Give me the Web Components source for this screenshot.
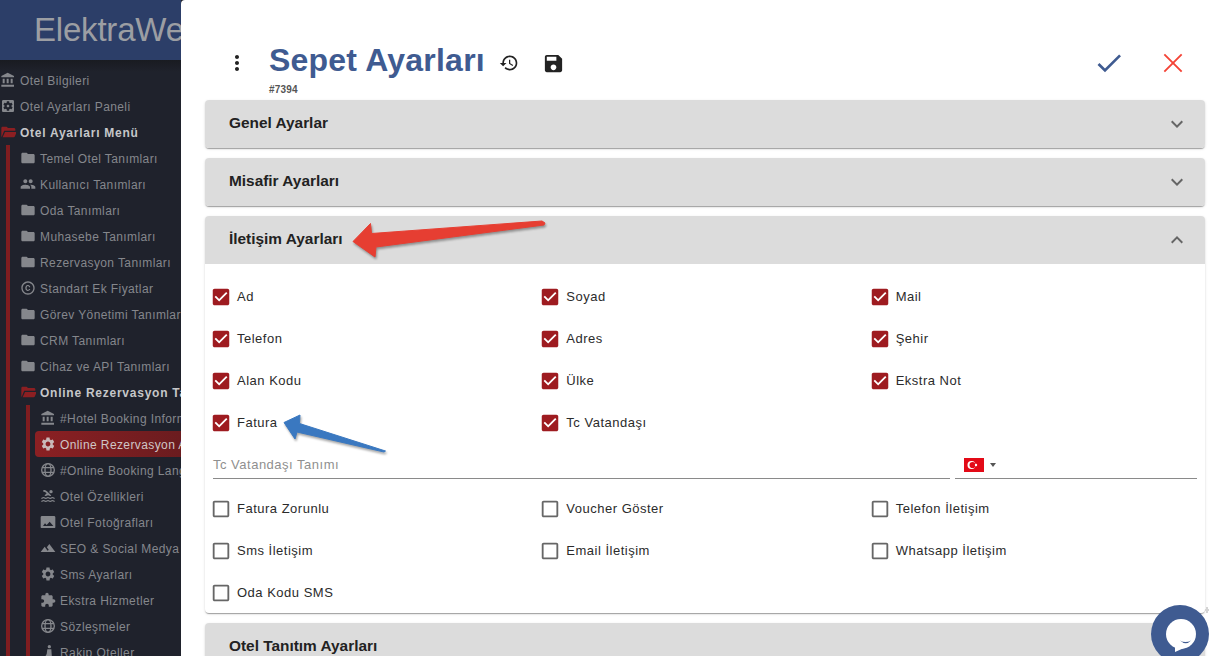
<!DOCTYPE html>
<html lang="tr">
<head>
<meta charset="utf-8">
<title>Sepet Ayarları</title>
<style>
    html, body { margin: 0; height: 100%; overflow: hidden; background: #1f222b; font-family: "Liberation Sans", Arial, sans-serif; }
    #app { display: flex; height: 656px; width: 1209px; overflow: hidden; }
</style>
</head>
<body>
<div id="app">
    <hotel-sidebar title="ElektraWeb">
        <side-item icon="bank">Otel Bilgileri</side-item>
        <side-item icon="panel">Otel Ayarları Paneli</side-item>
        <side-item icon="folderOpen" open>Otel Ayarları Menü</side-item>
        <side-group>
            <side-item icon="folder">Temel Otel Tanımları</side-item>
            <side-item icon="group">Kullanıcı Tanımları</side-item>
            <side-item icon="folder">Oda Tanımları</side-item>
            <side-item icon="folder">Muhasebe Tanımları</side-item>
            <side-item icon="folder">Rezervasyon Tanımları</side-item>
            <side-item icon="copyright">Standart Ek Fiyatlar</side-item>
            <side-item icon="folder">Görev Yönetimi Tanımları</side-item>
            <side-item icon="folder">CRM Tanımları</side-item>
            <side-item icon="folder">Cihaz ve API Tanımları</side-item>
            <side-item icon="folderOpen" open>Online Rezervasyon Tanımları</side-item>
            <side-group inner>
                <side-item icon="bank">#Hotel Booking Information</side-item>
                <side-item icon="gear" active>Online Rezervasyon Ayarları</side-item>
                <side-item icon="globe">#Online Booking Languages</side-item>
                <side-item icon="pool">Otel Özellikleri</side-item>
                <side-item icon="image">Otel Fotoğrafları</side-item>
                <side-item icon="terrain">SEO &amp; Social Medya</side-item>
                <side-item icon="gear">Sms Ayarları</side-item>
                <side-item icon="puzzle">Ekstra Hizmetler</side-item>
                <side-item icon="globe">Sözleşmeler</side-item>
                <side-item icon="pawn">Rakip Oteller</side-item>
            </side-group>
        </side-group>
    </hotel-sidebar>

    <settings-panel>
        <panel-header slot="header" code="#7394">Sepet Ayarları</panel-header>

        <acc-section label="Genel Ayarlar"></acc-section>
        <acc-section label="Misafir Ayarları"></acc-section>
        <acc-section label="İletişim Ayarları" open>
            <field-grid>
                <check-field checked>Ad</check-field>
                <check-field checked>Soyad</check-field>
                <check-field checked>Mail</check-field>
                <check-field checked>Telefon</check-field>
                <check-field checked>Adres</check-field>
                <check-field checked>Şehir</check-field>
                <check-field checked>Alan Kodu</check-field>
                <check-field checked>Ülke</check-field>
                <check-field checked>Ekstra Not</check-field>
                <check-field checked>Fatura</check-field>
                <check-field checked>Tc Vatandaşı</check-field>
            </field-grid>
            <lang-field placeholder="Tc Vatandaşı Tanımı"></lang-field>
            <field-grid>
                <check-field>Fatura Zorunlu</check-field>
                <check-field>Voucher Göster</check-field>
                <check-field>Telefon İletişim</check-field>
                <check-field>Sms İletişim</check-field>
                <check-field>Email İletişim</check-field>
                <check-field>Whatsapp İletişim</check-field>
                <check-field>Oda Kodu SMS</check-field>
            </field-grid>
        </acc-section>
        <acc-section label="Otel Tanıtım Ayarları"></acc-section>

        <note-arrow slot="over" color="#e63e32" left="345" top="214" width="210" height="50"
            points="8,27.5 25.5,9.5 26.5,19.5 197,7 200,9 199,11 31,33 30,43"></note-arrow>
        <note-arrow slot="over" color="#3a78c0" left="278" top="410" width="115" height="48"
            points="6,12.5 22,5 21.5,13.5 107.5,41 106,42 19,22 17,29"></note-arrow>
        <chat-button slot="over"></chat-button>
    </settings-panel>
</div>

<script>
const ICONS = {
    bank: '<path d="M4 10v7h3v-7H4zm6 0v7h3v-7h-3zM2 22h19v-3H2v3zm14-12v7h3v-7h-3zm-4.500-9L2 6v2h19V6l-9.500-5z"/>',
    panel: '<path d="M12 10c-1.100 0-2 .9-2 2s.9 2 2 2 2-.9 2-2-.9-2-2-2zm7-7H5c-1.110 0-2 .9-2 2v14c0 1.100.89 2 2 2h14c1.110 0 2-.9 2-2V5c0-1.100-.89-2-2-2zm-1.750 9c0 .23-.02.46-.05.68l1.480 1.160c.13.11.17.3.08.45l-1.400 2.420c-.09.15-.27.21-.43.15l-1.740-.7c-.36.28-.76.51-1.180.69l-.26 1.850c-.03.17-.18.3-.35.3h-2.800c-.17 0-.32-.13-.35-.29l-.26-1.850c-.43-.18-.82-.41-1.180-.69l-1.740.7c-.16.06-.34 0-.43-.15l-1.400-2.420c-.09-.15-.05-.34.08-.45l1.480-1.160c-.03-.23-.05-.46-.05-.69 0-.23.02-.46.05-.68l-1.480-1.160c-.13-.11-.17-.3-.08-.45l1.400-2.420c.09-.15.27-.21.43-.15l1.740.7c.36-.28.76-.51 1.180-.69l.26-1.850c.03-.17.18-.3.35-.3h2.800c.17 0 .32.13.35.29l.26 1.850c.43.18.82.41 1.180.69l1.740-.7c.16-.06.34 0 .43.15l1.400 2.420c.09.15.05.34-.08.45l-1.480 1.160c.03.23.05.46.05.69z"/>',
    folder: '<path d="M10 4H4c-1.100 0-1.990.9-1.990 2L2 18c0 1.100.9 2 2 2h16c1.100 0 2-.9 2-2V8c0-1.100-.9-2-2-2h-8l-2-2z"/>',
    folderOpen: '<path d="M10 4H4c-1.100 0-2 .9-2 2v12c0 .5.2 1 .5 1.400L6.200 10H23V8c0-1.100-.9-2-2-2h-9l-2-2z"/><path d="M7.500 12 4 20h16.500c.8 0 1.400-.4 1.700-1.100L25 12z"/>',
    group: '<path d="M16 11c1.660 0 2.990-1.340 2.990-3S17.660 5 16 5c-1.660 0-3 1.340-3 3s1.340 3 3 3zm-8 0c1.660 0 2.990-1.340 2.990-3S9.660 5 8 5C6.340 5 5 6.340 5 8s1.340 3 3 3zm0 2c-2.330 0-7 1.170-7 3.500V19h14v-2.500c0-2.330-4.670-3.500-7-3.500zm8 0c-.29 0-.62.02-.97.05 1.160.84 1.970 1.970 1.970 3.450V19h6v-2.500c0-2.330-4.670-3.500-7-3.500z"/>',
    copyright: '<path d="M10.080 10.860c.05-.33.16-.62.3-.87s.34-.46.59-.62c.24-.15.54-.22.91-.23.23.01.44.05.63.13.2.09.38.21.52.36s.25.33.34.53.13.42.14.64h1.790c-.02-.47-.11-.9-.28-1.290s-.4-.73-.7-1.010-.66-.5-1.080-.66-.88-.23-1.390-.23c-.65 0-1.220.11-1.700.34s-.88.53-1.200.92-.56.84-.71 1.360S8 11.290 8 11.870v.27c0 .58.08 1.120.23 1.640s.39.97.71 1.350.72.69 1.200.91 1.050.34 1.700.34c.47 0 .91-.08 1.320-.23s.77-.36 1.080-.63.56-.58.74-.94.29-.74.3-1.150h-1.790c-.01.21-.06.4-.15.58s-.21.33-.36.46-.32.23-.52.3c-.19.07-.39.09-.6.1-.36-.01-.66-.08-.89-.23-.25-.16-.45-.37-.59-.62s-.25-.55-.3-.88-.08-.67-.08-1v-.27c0-.35.03-.68.08-1.010zM12 2C6.480 2 2 6.480 2 12s4.480 10 10 10 10-4.480 10-10S17.520 2 12 2zm0 18c-4.410 0-8-3.590-8-8s3.590-8 8-8 8 3.590 8 8-3.590 8-8 8z"/>',
    gear: '<path d="M19.140 12.940c.04-.3.06-.61.06-.94 0-.32-.02-.64-.07-.94l2.030-1.580c.18-.14.23-.41.12-.61l-1.920-3.320c-.12-.22-.37-.29-.59-.22l-2.390.96c-.5-.38-1.030-.7-1.620-.94l-.36-2.540c-.04-.24-.24-.41-.48-.41h-3.840c-.24 0-.43.17-.47.41l-.36 2.540c-.59.24-1.130.57-1.620.94l-2.390-.96c-.22-.08-.47 0-.59.22L2.740 8.870c-.12.21-.08.47.12.61l2.030 1.580c-.05.3-.07.62-.07.94s.02.64.07.94l-2.030 1.580c-.18.14-.23.41-.12.61l1.920 3.320c.12.22.37.29.59.22l2.390-.96c.5.38 1.030.7 1.620.94l.36 2.540c.05.24.24.41.48.41h3.840c.24 0 .44-.17.47-.41l.36-2.540c.59-.24 1.130-.56 1.620-.94l2.390.96c.22.08.47 0 .59-.22l1.920-3.320c.12-.22.07-.47-.12-.61l-2.010-1.580zM12 15.600c-1.980 0-3.600-1.620-3.600-3.600s1.620-3.600 3.600-3.600 3.600 1.620 3.600 3.600-1.620 3.600-3.600 3.600z"/>',
    globe: '<g fill="none" stroke="currentColor" stroke-width="2"><circle cx="12" cy="12" r="9.500"/><ellipse cx="12" cy="12" rx="4.500" ry="9.500"/><path d="M3 8.500h18M3 15.500h18"/></g>',
    pool: '<path d="M22 21c-1.110 0-1.730-.37-2.180-.64-.37-.22-.6-.36-1.150-.36-.56 0-.78.13-1.150.36-.46.27-1.070.64-2.180.64s-1.730-.37-2.180-.64c-.37-.22-.6-.36-1.150-.36-.56 0-.78.13-1.150.36-.46.27-1.080.64-2.190.64-1.110 0-1.730-.37-2.180-.64-.37-.23-.6-.36-1.150-.36s-.78.13-1.150.36c-.46.27-1.080.64-2.190.64v-2c.56 0 .78-.13 1.150-.36.46-.27 1.080-.64 2.190-.64s1.730.37 2.180.64c.37.23.59.36 1.150.36.56 0 .78-.13 1.150-.36.46-.27 1.080-.64 2.190-.64 1.110 0 1.730.37 2.180.64.37.22.6.36 1.150.36s.78-.13 1.150-.36c.45-.27 1.070-.64 2.180-.64s1.730.37 2.180.64c.37.23.59.36 1.150.36v2zm0-4.500c-1.110 0-1.730-.37-2.180-.64-.37-.22-.6-.36-1.150-.36-.56 0-.78.13-1.150.36-.45.27-1.070.64-2.180.64s-1.730-.37-2.180-.64c-.37-.22-.6-.36-1.150-.36-.56 0-.78.13-1.150.36-.45.27-1.070.64-2.180.64s-1.730-.37-2.180-.64c-.37-.22-.6-.36-1.150-.36s-.78.13-1.150.36c-.47.27-1.090.64-2.200.64v-2c.56 0 .78-.13 1.150-.36.45-.27 1.070-.64 2.180-.64s1.730.37 2.180.64c.37.22.6.36 1.150.36.56 0 .78-.13 1.150-.36.45-.27 1.070-.64 2.180-.64s1.730.37 2.180.64c.37.22.6.36 1.150.36s.78-.13 1.150-.36c.45-.27 1.070-.64 2.180-.64s1.730.37 2.180.64c.37.22.6.36 1.150.36v2zM8.670 12c.56 0 .78-.13 1.150-.36.46-.27 1.080-.64 2.190-.64 1.110 0 1.730.37 2.180.64.37.22.6.36 1.150.36s.78-.13 1.150-.36c.12-.07.26-.15.41-.23L10.480 5C8.930 3.450 7.500 2.990 5 3v2.500c1.820-.01 2.890.39 4 1.500l1 1-3.250 3.250c.31.12.56.27.77.39.37.23.59.36 1.150.36z"/><circle cx="16.500" cy="5.500" r="2.500"/>',
    image: '<path d="M23 20V5c0-1.100-.9-2-2-2H3C1.900 3 1 3.900 1 5v15c0 .6.400 1 1 1h20c.6 0 1-.4 1-1zM7.500 14l2.500 2.500 4.500-5 5.500 6.500H4.500l3-4z"/>',
    terrain: '<path d="M14 6l-3.750 5 2.850 3.800-1.600 1.200C9.810 13.750 7 10 7 10l-6 8h22L14 6z"/>',
    puzzle: '<path d="M20.500 11H19V7c0-1.100-.9-2-2-2h-4V3.500C13 2.120 11.880 1 10.500 1S8 2.120 8 3.500V5H4c-1.100 0-1.990.9-1.990 2v3.800H3.500c1.490 0 2.700 1.210 2.700 2.700s-1.210 2.700-2.700 2.700H2V20c0 1.100.9 2 2 2h3.800v-1.500c0-1.490 1.210-2.700 2.700-2.700 1.490 0 2.700 1.210 2.700 2.700V22H17c1.100 0 2-.9 2-2v-4h1.500c1.380 0 2.500-1.120 2.500-2.500S21.880 11 20.500 11z"/>',
    pawn: '<circle cx="14" cy="4" r="2.500"/><path d="M11 8h6l1 14H6l4-7z"/>',
    moreVert: '<path d="M12 8c1.100 0 2-.9 2-2s-.9-2-2-2-2 .9-2 2 .9 2 2 2zm0 2c-1.100 0-2 .9-2 2s.9 2 2 2 2-.9 2-2-.9-2-2-2zm0 6c-1.100 0-2 .9-2 2s.9 2 2 2 2-.9 2-2-.9-2-2-2z"/>',
    history: '<path d="M13 3c-4.970 0-9 4.030-9 9H1l3.890 3.890.07.14L9 12H6c0-3.870 3.130-7 7-7s7 3.130 7 7-3.130 7-7 7c-1.930 0-3.680-.79-4.940-2.060l-1.420 1.420C8.270 19.990 10.510 21 13 21c4.970 0 9-4.030 9-9s-4.030-9-9-9zm-1 5v5l4.280 2.540.72-1.210-3.500-2.080V8H12z"/>',
    save: '<path d="M17 3H5c-1.110 0-2 .9-2 2v14c0 1.100.89 2 2 2h14c1.100 0 2-.9 2-2V7l-4-4zm-5 16c-1.660 0-3-1.340-3-3s1.340-3 3-3 3 1.340 3 3-1.340 3-3 3zm3-10H5V5h10v4z"/>',
    check: '<path d="M9 16.170L4.830 12l-1.420 1.410L9 19 21 7l-1.410-1.410z"/>',
    close: '<path d="M5.500 5.500l13 13M18.500 5.500l-13 13" fill="none" stroke="currentColor" stroke-width="1.400"/>',
    expandMore: '<path d="M16.590 8.590L12 13.170 7.410 8.590 6 10l6 6 6-6z"/>',
    expandLess: '<path d="M12 8l-6 6 1.410 1.410L12 10.830l4.590 4.580L18 14z"/>',
    boxChecked: '<path d="M19 3H5c-1.110 0-2 .9-2 2v14c0 1.100.89 2 2 2h14c1.100 0 2-.9 2-2V5c0-1.100-.89-2-2-2zm-9 14l-5-5 1.410-1.410L10 14.170l7.590-7.590L19 8l-9 9z"/>',
    boxBlank: '<path d="M19 5v14H5V5h14m0-2H5c-1.100 0-2 .9-2 2v14c0 1.100.9 2 2 2h14c1.100 0 2-.9 2-2V5c0-1.100-.9-2-2-2z"/>'
};

const iconSvg = (name, size) =>
    `<svg width="${size}" height="${size}" viewBox="0 0 24 24" fill="currentColor" style="display:block;flex:none">${ICONS[name]}</svg>`;

class HotelSidebar extends HTMLElement {
    constructor() {
        super();
        this.attachShadow({ mode: "open" });
        this.shadowRoot.innerHTML = `
            <style>
                :host { display: block; flex: none; width: 181px; height: 656px; overflow: hidden; background: linear-gradient(90deg, #1f222c, #1d2029); }
                .brand { height: 60px; box-sizing: border-box; padding-left: 34px; display: flex; align-items: center; overflow: hidden; white-space: nowrap;
                    background: #2c3e68; color: #9c9ea3; font-size: 33px; letter-spacing: -.2px; }
                nav { padding-top: 7px; background: linear-gradient(#191b21, #1f222c 12px); }
            </style>
            <div class="brand"></div>
            <nav><slot></slot></nav>
        `;
        this.shadowRoot.querySelector(".brand").textContent = this.getAttribute("title");
    }
}

class SideGroup extends HTMLElement {
    constructor() {
        super();
        this.attachShadow({ mode: "open" });
        this.shadowRoot.innerHTML = `
            <style>
                :host { display: block; margin-left: 6px; border-left: 4px solid #7f1d20; padding-left: 10px; }
                :host([inner]) { padding-left: 5px; }
            </style>
            <slot></slot>
        `;
    }
}

class SideItem extends HTMLElement {
    constructor() {
        super();
        this.attachShadow({ mode: "open" });
        const inner = this.parentElement.hasAttribute("inner");
        this.shadowRoot.innerHTML = `
            <style>
                :host { display: flex; align-items: center; gap: 4px; height: 26px; box-sizing: border-box; white-space: nowrap; overflow: hidden;
                    color: #85878c; font-size: 12px; letter-spacing: .4px; padding-left: ${inner ? 5 : 0}px; }
                :host([open]) { color: #c6c7c9; font-weight: bold; letter-spacing: .75px; }
                :host([open]) svg { color: #8c1f22; }
                :host([active]) { color: #d0c6c6; border-radius: 4px 0 0 4px; background: linear-gradient(90deg, #8b2023, #6b1c1f); }
                svg { color: #85878c; }
                :host([active]) svg { color: #c9b9b9; }
                .text { padding-top: 2px; }
            </style>
            ${iconSvg(this.getAttribute("icon"), 16)}
            <span class="text"><slot></slot></span>
        `;
    }
}

class SettingsPanel extends HTMLElement {
    constructor() {
        super();
        this.attachShadow({ mode: "open" });
        this.shadowRoot.innerHTML = `
            <style>
                :host { display: block; position: relative; flex: 1; min-width: 0; height: 656px; overflow: hidden; background: #fff; border-radius: 4px 0 0 0; }
                .list { display: flex; flex-direction: column; gap: 10px; padding: 0 4px 0 24px; }
            </style>
            <slot name="header"></slot>
            <div class="list"><slot></slot></div>
            <slot name="over"></slot>
        `;
    }
}

class PanelHeader extends HTMLElement {
    constructor() {
        super();
        this.attachShadow({ mode: "open" });
        this.shadowRoot.innerHTML = `
            <style>
                :host { display: flex; align-items: flex-start; height: 100px; box-sizing: border-box; padding: 43px 4px 0 36px; }
                .btn { flex: none; width: 40px; height: 40px; display: flex; align-items: center; justify-content: center; color: #222; }
                .titles { margin-left: 12px; margin-top: -1px; }
                h1 { margin: 0; font-size: 32px; line-height: 36px; font-weight: bold; letter-spacing: .22px; color: #3f5b91; white-space: nowrap; }
                .code { font-size: 10px; font-weight: bold; letter-spacing: .2px; color: #555; margin-top: 6px; line-height: 12px; }
                .tools { display: flex; margin-left: 2px; }
                .tools .btn { width: 44px; }
                .tools .btn + .btn { width: 46px; }
                .actions { display: flex; margin-left: auto; }
                .actions .btn { width: 64px; }
            </style>
            <div class="btn">${iconSvg("moreVert", 24)}</div>
            <div class="titles">
                <h1><slot></slot></h1>
                <div class="code">${this.getAttribute("code")}</div>
            </div>
            <div class="tools">
                <div class="btn">${iconSvg("history", 20)}</div>
                <div class="btn">${iconSvg("save", 23)}</div>
            </div>
            <div class="actions">
                <div class="btn" style="color:#3f5b91">${iconSvg("check", 32)}</div>
                <div class="btn" style="color:#f44336">${iconSvg("close", 32)}</div>
            </div>
        `;
    }
}

class AccSection extends HTMLElement {
    constructor() {
        super();
        this.attachShadow({ mode: "open" });
        const open = this.hasAttribute("open");
        this.shadowRoot.innerHTML = `
            <style>
                :host { display: block; flex: none; background: #fff; border-radius: 4px; overflow: hidden;
                    box-shadow: 0 2px 1px -1px rgba(0,0,0,.2), 0 1px 1px 0 rgba(0,0,0,.14), 0 1px 3px 0 rgba(0,0,0,.12); }
                .head { display: flex; align-items: center; justify-content: space-between; height: 48px; box-sizing: border-box; padding: 0 16px 0 24px; background: #dcdcdc; }
                .label { font-size: 15.400px; font-weight: bold; color: #222; padding-bottom: 2px; }
                .chev { color: #666; }
                .body { padding: 12px 4px 0 8px; margin-bottom: -1px; }
            </style>
            <div class="head">
                <span class="label">${this.getAttribute("label")}</span>
                <span class="chev">${iconSvg(open ? "expandLess" : "expandMore", 24)}</span>
            </div>
            ${open ? '<div class="body"><slot></slot></div>' : ""}
        `;
    }
}

class FieldGrid extends HTMLElement {
    constructor() {
        super();
        this.attachShadow({ mode: "open" });
        this.shadowRoot.innerHTML = `
            <style>:host { display: grid; grid-template-columns: repeat(3, 1fr); }</style>
            <slot></slot>
        `;
    }
}

class CheckField extends HTMLElement {
    constructor() {
        super();
        this.attachShadow({ mode: "open" });
        const checked = this.hasAttribute("checked");
        this.shadowRoot.innerHTML = `
            <style>
                :host { display: flex; align-items: center; gap: 5px; height: 42px; margin-left: -3px; font-size: 13px; letter-spacing: .5px; color: #2b2b2b; }
                .box { color: ${checked ? "#9e1b20" : "#666"}; }
                .text { padding-bottom: 2px; }
            </style>
            <span class="box">${iconSvg(checked ? "boxChecked" : "boxBlank", 22)}</span>
            <span class="text"><slot></slot></span>
        `;
    }
}

class LangField extends HTMLElement {
    constructor() {
        super();
        this.attachShadow({ mode: "open" });
        this.shadowRoot.innerHTML = `
            <style>
                :host { display: flex; gap: 5px; height: 44px; box-sizing: border-box; padding-right: 4px; }
                .line { height: 35px; box-sizing: border-box; border-bottom: 1px solid #8a8a8a; display: flex; align-items: center; padding-top: 7px; }
                .main { flex: 1; font-size: 13px; letter-spacing: .5px; color: #8f8f8f; }
                .lang { flex: none; width: 242px; padding-left: 9px; gap: 6px; }
                .flag { display: block; }
                .caret { width: 0; height: 0; border: 3px solid transparent; border-top: 4px solid #555; border-bottom: 0; }
            </style>
            <div class="line main">${this.getAttribute("placeholder")}</div>
            <div class="line lang">
                <svg class="flag" width="20" height="14" viewBox="0 0 20 14">
                    <rect width="20" height="14" fill="#e30a17"/>
                    <circle cx="7.500" cy="7" r="4" fill="#fff"/>
                    <circle cx="8.600" cy="7" r="3.100" fill="#e30a17"/>
                    <circle cx="12" cy="7" r="1.200" fill="#fff"/>
                </svg>
                <span class="caret"></span>
            </div>
        `;
    }
}

// annotation arrows drawn on top of the screenshot
class NoteArrow extends HTMLElement {
    constructor() {
        super();
        this.attachShadow({ mode: "open" });
        const w = this.getAttribute("width");
        const h = this.getAttribute("height");
        this.shadowRoot.innerHTML = `
            <style>
                :host { position: absolute; left: ${this.getAttribute("left") - 181}px; top: ${this.getAttribute("top")}px; }
                svg { display: block; overflow: visible; filter: drop-shadow(1px 2px 1px rgba(0,0,0,.35)); }
            </style>
            <svg width="${w}" height="${h}" viewBox="0 0 ${w} ${h}">
                <polygon points="${this.getAttribute("points")}" fill="${this.getAttribute("color")}" stroke="${this.getAttribute("color")}" stroke-width="1" stroke-linejoin="round"/>
            </svg>
        `;
    }
}

class ChatButton extends HTMLElement {
    constructor() {
        super();
        this.attachShadow({ mode: "open" });
        this.shadowRoot.innerHTML = `
            <style>
                :host { position: absolute; left: 970px; top: 605px; width: 58px; height: 58px; border-radius: 50%; background: #3f5b91; }
                svg { display: block; }
                .mark { position: absolute; left: 54px; top: 2px; width: 4px; height: 6px; background: linear-gradient(#d4d4d4, #d4d4d4) 1px 0 / 2px 6px no-repeat, linear-gradient(#d4d4d4, #d4d4d4) 0 2px / 4px 2px no-repeat; }
            </style>
            <svg width="58" height="58" viewBox="0 0 58 58">
                <circle cx="30" cy="29" r="15" fill="#fff"/>
                <path d="M24 41 L24 47 L33 43z" fill="#fff"/>
                <path d="M29 35.500 Q34.500 38.500 40 35.500 Q35 41 29 35.500z" fill="#3f5b91"/>
            </svg>
            <div class="mark"></div>
        `;
    }
}

customElements.define("hotel-sidebar", HotelSidebar);
customElements.define("side-group", SideGroup);
customElements.define("side-item", SideItem);
customElements.define("settings-panel", SettingsPanel);
customElements.define("panel-header", PanelHeader);
customElements.define("acc-section", AccSection);
customElements.define("field-grid", FieldGrid);
customElements.define("check-field", CheckField);
customElements.define("lang-field", LangField);
customElements.define("note-arrow", NoteArrow);
customElements.define("chat-button", ChatButton);
</script>
</body>
</html>
